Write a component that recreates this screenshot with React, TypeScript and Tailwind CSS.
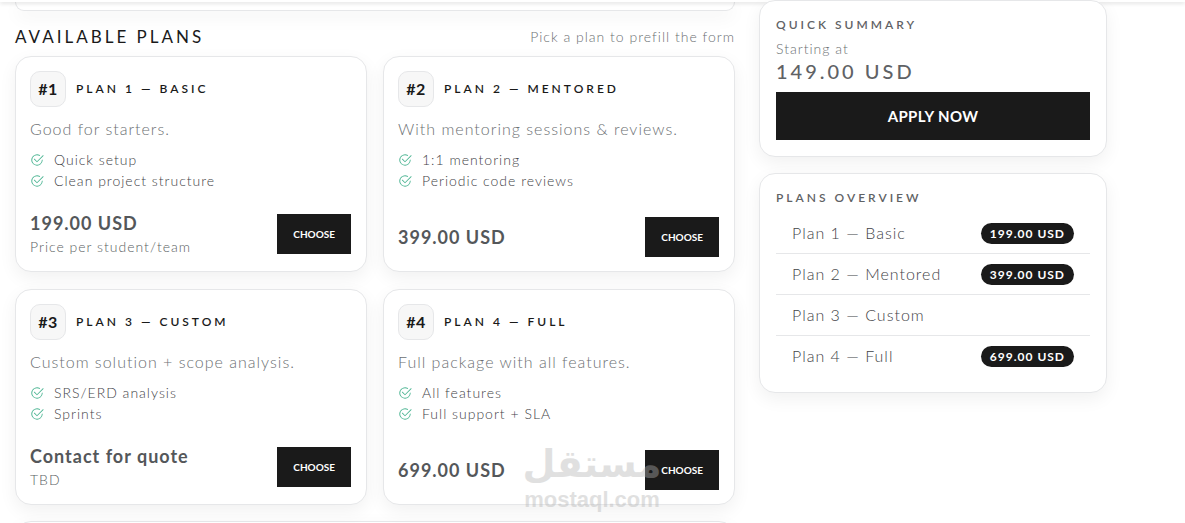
import type { ReactNode } from 'react'
import clsx from 'clsx'
import { BsCheck2Circle } from 'react-icons/bs'

interface PlanType {
  id: number
  name: string
  description: string
  features: string[]
  price: string | null
  note?: string
}

const plans: PlanType[] = [
  {
    id: 1,
    name: 'Basic',
    description: 'Good for starters.',
    features: ['Quick setup', 'Clean project structure'],
    price: '199.00 USD',
    note: 'Price per student/team',
  },
  {
    id: 2,
    name: 'Mentored',
    description: 'With mentoring sessions & reviews.',
    features: ['1:1 mentoring', 'Periodic code reviews'],
    price: '399.00 USD',
  },
  {
    id: 3,
    name: 'Custom',
    description: 'Custom solution + scope analysis.',
    features: ['SRS/ERD analysis', 'Sprints'],
    price: null,
    note: 'TBD',
  },
  {
    id: 4,
    name: 'Full',
    description: 'Full package with all features.',
    features: ['All features', 'Full support + SLA'],
    price: '699.00 USD',
  },
]

function Card({ children, className }: { children?: ReactNode; className?: string }) {
  return (
    <section
      className={clsx('border border-[#e6e7e9] bg-white shadow-[0_6px_18px_rgba(0,0,0,0.06)]', className)}
    >
      {children}
    </section>
  )
}

function PlanCard({ plan }: { plan: PlanType }) {
  return (
    <Card className="flex flex-col rounded-2xl py-3.5 pr-[15px] pl-3.5">
      <div className="flex items-center gap-2.5">
        <span className="flex size-9 items-center justify-center rounded-[10px] border border-[#e6e7e9] bg-[#f7f7f7] text-base font-bold tracking-wide text-[#1a1a1a]">
          #{plan.id}
        </span>
        <h3 className="text-xs font-semibold tracking-[3px] text-[#1a1a1a] uppercase">
          Plan {plan.id} — {plan.name}
        </h3>
      </div>
      <p className="mt-2.5 text-base leading-6 text-[#6c7073]">{plan.description}</p>
      <ul className="mt-2 mb-5 text-sm leading-[21px] text-[#3f4347]">
        {plan.features.map((feature) => (
          <li key={feature} className="flex items-center gap-2.5">
            <BsCheck2Circle className="size-3.5 text-[#4db593]" />
            {feature}
          </li>
        ))}
      </ul>
      <div className="mt-auto flex items-center justify-between">
        <div>
          <p className="text-lg leading-[25px] font-bold text-[#54575a]">{plan.price ?? 'Contact for quote'}</p>
          {plan.note ? <p className="text-sm leading-[21px] text-[#5b5f63]">{plan.note}</p> : null}
        </div>
        <button type="button" className="h-10 bg-[#1a1a1a] px-4 text-[10px] font-bold tracking-normal text-white">
          CHOOSE
        </button>
      </div>
    </Card>
  )
}

function Sidebar() {
  return (
    <aside className="relative z-20 -mt-0.5 flex flex-col gap-4 px-3">
      <Card className="rounded-2xl p-4">
        <h2 className="text-xs leading-[15px] font-semibold tracking-[3px] text-[#5f6265] uppercase">Quick Summary</h2>
        <p className="mt-1.5 text-sm leading-[21px] text-[#6c7073]">Starting at</p>
        <p className="text-xl leading-[25px] font-medium tracking-[3px] text-[#5f6265]">149.00 USD</p>
        <button type="button" className="mt-2 h-12 w-full bg-[#1a1a1a] text-[15px] font-bold tracking-wide text-white">
          APPLY NOW
        </button>
      </Card>
      <Card className="rounded-2xl p-4">
        <h2 className="text-xs leading-[15px] font-semibold tracking-[3px] text-[#5f6265] uppercase">Plans Overview</h2>
        <ul className="mt-2 divide-y divide-[#e6e7e9]">
          {plans.map((plan) => (
            <li key={plan.id} className="flex items-center justify-between px-4 py-2">
              <span className="leading-6 text-[#3f4347]">
                Plan {plan.id} — {plan.name}
              </span>
              {plan.price ? (
                <span className="rounded-full bg-[#1a1a1a] px-[9px] text-xs leading-[21px] font-bold text-white">
                  {plan.price}
                </span>
              ) : null}
            </li>
          ))}
        </ul>
      </Card>
    </aside>
  )
}

function Watermark() {
  return (
    <div className="pointer-events-none absolute top-[442px] left-[523px] z-30 flex w-[138px] flex-col items-center tracking-normal text-[#b4b4b4] opacity-40">
      <span lang="ar" dir="rtl" className="font-['DejaVu_Sans',sans-serif] text-[38px] leading-[44px] font-bold">
        مستقل
      </span>
      <span className="font-['Liberation_Sans',Arial,sans-serif] text-[22px] leading-7 font-bold">mostaql.com</span>
    </div>
  )
}

export default function App() {
  return (
    <div className="relative h-screen overflow-hidden bg-white font-['Lato',sans-serif] font-light tracking-[1px]">
      <header className="relative z-10 h-0.5 bg-white shadow-[0_1px_4px_rgba(0,0,0,0.2)]" />
      <div className="ml-[3px] grid max-w-[1116px] grid-cols-3">
        <main className="col-span-2 px-3">
          <Card className="h-[9px] rounded-b-2xl border-t-0" />
          <div className="mt-[13px] mb-[7px] flex items-center justify-between">
            <h2 className="text-[17px] leading-[25px] font-normal tracking-[3px] text-[#1a1a1a] uppercase">
              Available Plans
            </h2>
            <p className="text-sm text-[#6c7073]">Pick a plan to prefill the form</p>
          </div>
          <div className="grid grid-cols-2 gap-x-4 gap-y-[17px]">
            {plans.map((plan) => (
              <PlanCard key={plan.id} plan={plan} />
            ))}
          </div>
          <Card className="mt-4 h-40 rounded-2xl" />
        </main>
        <Sidebar />
      </div>
      <Watermark />
    </div>
  )
}
